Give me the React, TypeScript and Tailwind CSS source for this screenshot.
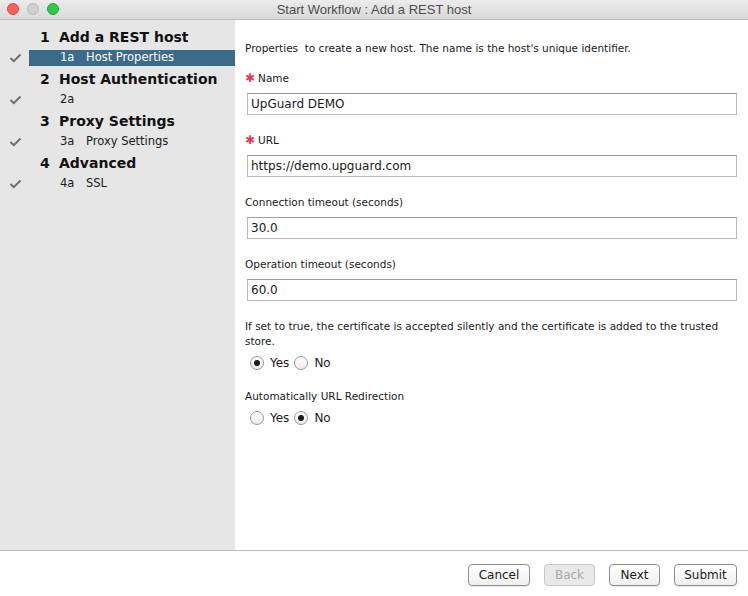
import { useState } from 'react'

const STEPS = [
  { num: '1', title: 'Add a REST host', sub: '1a', subTitle: 'Host Properties', selected: true },
  { num: '2', title: 'Host Authentication', sub: '2a', subTitle: '', selected: false },
  { num: '3', title: 'Proxy Settings', sub: '3a', subTitle: 'Proxy Settings', selected: false },
  { num: '4', title: 'Advanced', sub: '4a', subTitle: 'SSL', selected: false },
]

function Check() {
  return (
    <svg width="13" height="10" viewBox="0 0 13 10" className="shrink-0">
      <polyline points="1.5,5 4.8,8.2 11.5,1.5" fill="none" stroke="#6e6e6e" strokeWidth="2" />
    </svg>
  )
}

function Radio({ checked, onClick }: { checked: boolean; onClick: () => void }) {
  return (
    <button
      onClick={onClick}
      className="w-[14px] h-[14px] rounded-full border border-[#999] bg-gradient-to-b from-white to-[#ececec] flex items-center justify-center shrink-0"
    >
      {checked && <span className="w-[6px] h-[6px] rounded-full bg-[#1a1a1a]" />}
    </button>
  )
}

function YesNo({ value, onChange }: { value: boolean; onChange: (v: boolean) => void }) {
  return (
    <div className="flex items-center h-[16px] pl-[5px] text-[12px] text-[#1a1a1a]">
      <Radio checked={value} onClick={() => onChange(true)} />
      <span className="ml-[6px] mr-[5px]">Yes</span>
      <Radio checked={!value} onClick={() => onChange(false)} />
      <span className="ml-[6px]">No</span>
    </div>
  )
}

function Field({ label, value, required }: { label: string; value: string; required?: boolean }) {
  return (
    <div>
      <div className="h-[14px] leading-[14px] text-[10.5px] text-[#1a1a1a] flex items-center">
        {required && <span className="text-[#e0394f] text-[12px] mr-[3px]">✱</span>}
        {label}
      </div>
      <input
        defaultValue={value}
        className="mt-[8px] ml-[2px] w-[490px] h-[22px] border border-[#b9b9b9] border-t-[#9e9e9e] bg-white pl-[3px] text-[12px] text-[#1a1a1a] outline-none"
      />
    </div>
  )
}

function Btn({ children, disabled, w }: { children: string; disabled?: boolean; w: string }) {
  return (
    <button
      disabled={disabled}
      className={`${w} h-[22px] rounded-[4px] border text-[12px] leading-none ${
        disabled
          ? 'border-[#c8c8c8] bg-[#e9e9e9] text-[#a8a8a8]'
          : 'border-[#8e8e8e] bg-gradient-to-b from-white to-[#f0f0f0] text-[#1a1a1a] shadow-[0_1px_0_rgba(0,0,0,0.08)]'
      }`}
    >
      {children}
    </button>
  )
}

export default function App() {
  const [trustCert, setTrustCert] = useState(true)
  const [redirect, setRedirect] = useState(false)

  return (
    <div className="w-[748px] h-[596px] flex flex-col bg-white overflow-hidden font-['DejaVu_Sans',sans-serif]">
      {/* Title bar */}
      <div className="relative h-[20px] shrink-0 flex items-center justify-center bg-gradient-to-b from-[#ececec] to-[#d9d9d9] border-b border-[#bdbdbd]">
        <div className="absolute left-[7px] top-[3px] flex gap-[8px]">
          <span className="w-[12px] h-[12px] rounded-full bg-[#fc5f57] border border-[#de4a42]" />
          <span className="w-[12px] h-[12px] rounded-full bg-[#d0d0d0] border border-[#b9b9b9]" />
          <span className="w-[12px] h-[12px] rounded-full bg-[#33c748] border border-[#26a934]" />
        </div>
        <span className="font-['Liberation_Sans',sans-serif] text-[13px] text-[#4d4d4d]">Start Workflow : Add a REST host</span>
      </div>

      <div className="flex flex-1 min-h-0">
        {/* Steps sidebar */}
        <div className="w-[235px] shrink-0 bg-[#e6e6e6] pt-[4px]">
          {STEPS.map(s => (
            <div key={s.num}>
              <div className="h-[26px] flex items-center pl-[40px] text-[14px] font-bold text-[#111]">
                <span className="w-[19px]">{s.num}</span>
                <span>{s.title}</span>
              </div>
              <div className="h-[16px] flex items-center">
                <div className="w-[29px] pl-[9px] flex items-center">
                  <Check />
                </div>
                <div
                  className={`flex-1 h-full flex items-center pl-[31px] text-[11.5px] ${
                    s.selected ? 'bg-[#3b6a8b] text-white' : 'text-[#1a1a1a]'
                  }`}
                >
                  <span className="w-[26px]">{s.sub}</span>
                  <span>{s.subTitle}</span>
                </div>
              </div>
            </div>
          ))}
        </div>

        {/* Form */}
        <div className="flex-1 pl-[10px] pr-[11px]">
          <p className="mt-[21px] h-[14px] leading-[14px] text-[10.5px] text-[#1a1a1a] whitespace-nowrap">
            Properties&nbsp; to create a new host. The name is the host's unique identifier.
          </p>
          <div className="mt-[16px] flex flex-col gap-[18px]">
            <Field label="Name" value="UpGuard DEMO" required />
            <Field label="URL" value="https://demo.upguard.com" required />
            <Field label="Connection timeout (seconds)" value="30.0" />
            <Field label="Operation timeout (seconds)" value="60.0" />
          </div>
          <p className="mt-[18px] leading-[15px] text-[10.5px] text-[#1a1a1a]">
            If set to true, the certificate is accepted silently and the certificate is added to the trusted
            <br />
            store.
          </p>
          <div className="mt-[6px]">
            <YesNo value={trustCert} onChange={setTrustCert} />
          </div>
          <div className="mt-[18px] h-[14px] leading-[14px] text-[10.5px] text-[#1a1a1a]">Automatically URL Redirection</div>
          <div className="mt-[7px]">
            <YesNo value={redirect} onChange={setRedirect} />
          </div>
        </div>
      </div>

      {/* Footer */}
      <div className="h-[46px] shrink-0 border-t border-[#bcbcbc] flex justify-end items-start pt-[13px] pr-[11px] gap-[14px]">
        <Btn w="w-[62px]">Cancel</Btn>
        <Btn w="w-[51px]" disabled>Back</Btn>
        <Btn w="w-[51px]">Next</Btn>
        <Btn w="w-[63px]">Submit</Btn>
      </div>
    </div>
  )
}
